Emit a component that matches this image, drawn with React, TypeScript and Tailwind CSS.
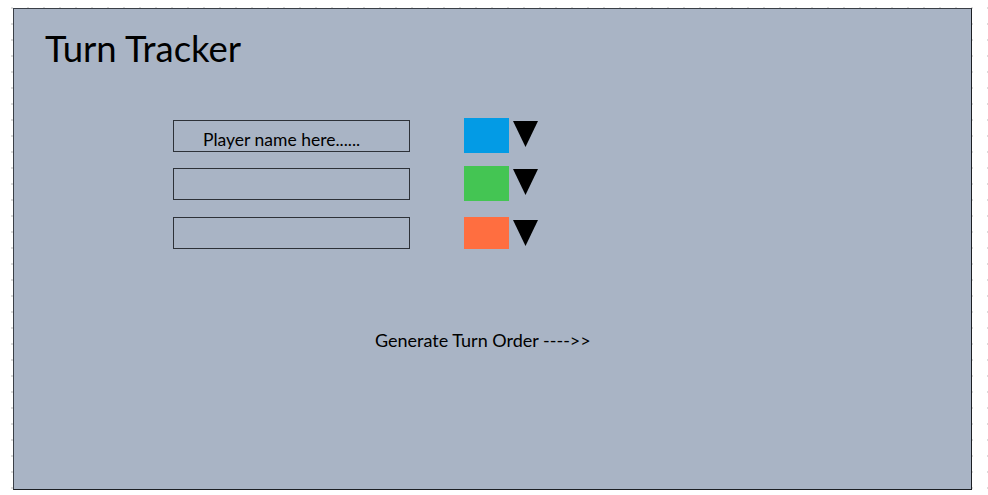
import { useState } from 'react';

type Player = {
  id: number;
  name: string;
  color: string;
  placeholder?: string;
};

const initialPlayers: Player[] = [
  { id: 1, name: '', color: 'bg-[#039be5]', placeholder: 'Player name here......' },
  { id: 2, name: '', color: 'bg-[#44c553]' },
  { id: 3, name: '', color: 'bg-[#ff6e40]' },
];

function DownTriangle() {
  return (
    <svg width="25" height="26" viewBox="0 0 25 26" className="shrink-0">
      <polygon points="0,0 25,0 12.5,26" fill="#000" />
    </svg>
  );
}

export default function App() {
  const [players, setPlayers] = useState(initialPlayers);

  const rowSpacing = ['mt-0', 'mt-[13px]', 'mt-[16px]'];
  const swatchHeight = ['h-[35px]', 'h-[35px]', 'h-[32px]'];

  return (
    <div
      className="w-[988px] h-[495px] bg-white bg-[radial-gradient(circle,#dcdcdc_0.8px,transparent_1.2px)] bg-size-[16px_16px] bg-position-[4px_0px] pt-[8px] pl-[13px]"
      style={{ fontFamily: 'Lato, "Liberation Sans", sans-serif' }}
    >
      <div className="w-[959px] h-[482px] bg-[#a9b4c5] border border-[#3a3f47] border-r-[#1c1f24] border-b-[#1c1f24] flex flex-col">
        <h1 className="pl-[31px] pt-[21px] text-[36.5px] leading-[36px] text-black font-normal">Turn Tracker</h1>

        <div className="mt-[52px] pl-[159px] flex flex-col">
          {players.map((p, i) => (
            <div key={p.id} className={`flex items-center ${rowSpacing[i]}`}>
              <input
                value={p.name}
                placeholder={p.placeholder}
                onChange={(e) =>
                  setPlayers((prev) => prev.map((x) => (x.id === p.id ? { ...x, name: e.target.value } : x)))
                }
                className="w-[237px] h-[32px] border border-[#2d3138] bg-transparent pl-[29px] pt-[8px] pb-0 text-[17.5px] text-black placeholder:text-black outline-none"
              />
              <div className={`ml-[54px] w-[45px] ${swatchHeight[i]} ${p.color}`} />
              <div className="ml-[4px] self-start mt-[3px]">
                <DownTriangle />
              </div>
            </div>
          ))}
        </div>

        <div className="mt-[80px] pl-[361px] text-[18px] leading-[22px] text-black">Generate Turn Order ----&gt;&gt;</div>
      </div>
    </div>
  );
}
